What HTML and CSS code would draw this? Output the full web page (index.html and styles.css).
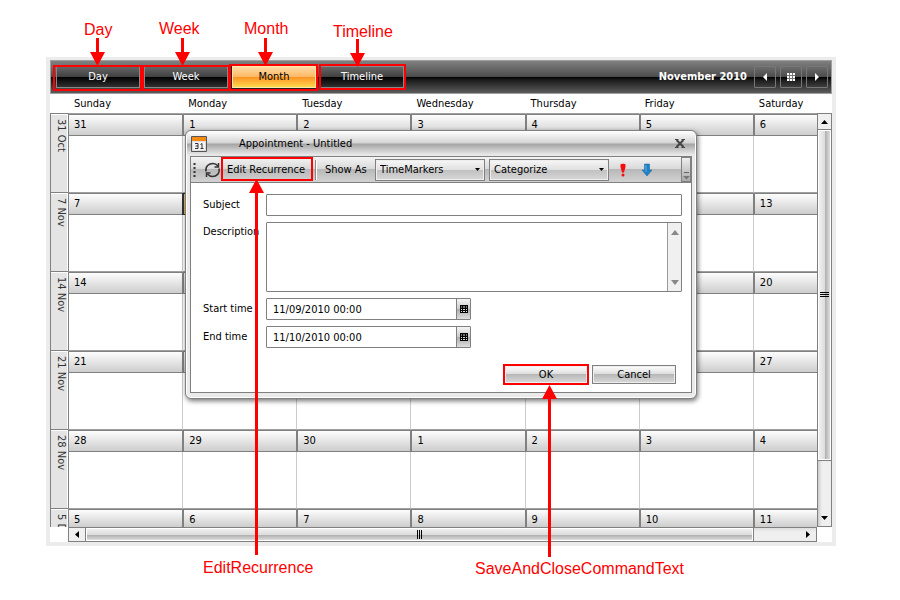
FILE: index.html
```html
<!DOCTYPE html>
<html lang="en">
<head>
<meta charset="utf-8">
<title>Scheduler</title>
<link rel="stylesheet" href="styles.css">
</head>
<body>
<main class="scheduler">
  <header class="toolbar">
    <nav class="views">
      <button class="view">Day</button>
      <button class="view">Week</button>
      <button class="view view-active">Month</button>
      <button class="view">Timeline</button>
    </nav>
    <h1 class="period">November 2010</h1>
    <div class="pager">
      <button class="pager-btn" aria-label="Previous"><svg width="14" height="14"><path d="M9 3v8L5 7z" fill="#fff"/></svg></button>
      <button class="pager-btn" aria-label="Pick date"><svg width="14" height="14"><path d="M3 3h8v8H3z" fill="#fff"/><path d="M5.5 3v8M8.500 3v8M3 5.500h8M3 8.500h8" stroke="#777"/></svg></button>
      <button class="pager-btn" aria-label="Next"><svg width="14" height="14"><path d="M5 3v8l4-4z" fill="#fff"/></svg></button>
    </div>
  </header>
  <div class="viewport">
    <div class="clip">
      <table class="month">
        <thead><tr><th class="corner"></th><th>Sunday</th><th>Monday</th><th>Tuesday</th><th>Wednesday</th><th>Thursday</th><th>Friday</th><th>Saturday</th></tr></thead>
        <tbody>
          <tr><th><span>31 Oct</span></th><td><b>31</b></td><td><b>1</b></td><td><b>2</b></td><td><b>3</b></td><td><b>4</b></td><td><b>5</b></td><td><b>6</b></td></tr>
          <tr><th><span>7 Nov</span></th><td><b>7</b></td><td class="today"><b>8</b></td><td><b>9</b></td><td><b>10</b></td><td><b>11</b></td><td><b>12</b></td><td><b>13</b></td></tr>
          <tr><th><span>14 Nov</span></th><td><b>14</b></td><td><b>15</b></td><td><b>16</b></td><td><b>17</b></td><td><b>18</b></td><td><b>19</b></td><td><b>20</b></td></tr>
          <tr><th><span>21 Nov</span></th><td><b>21</b></td><td><b>22</b></td><td><b>23</b></td><td><b>24</b></td><td><b>25</b></td><td><b>26</b></td><td><b>27</b></td></tr>
          <tr><th><span>28 Nov</span></th><td><b>28</b></td><td><b>29</b></td><td><b>30</b></td><td><b>1</b></td><td><b>2</b></td><td><b>3</b></td><td><b>4</b></td></tr>
          <tr class="partial"><th><span>5 Dec</span></th><td><b>5</b></td><td><b>6</b></td><td><b>7</b></td><td><b>8</b></td><td><b>9</b></td><td><b>10</b></td><td><b>11</b></td></tr>
        </tbody>
      </table>
    </div>
    <div class="vscroll">
      <button class="sb-btn" aria-label="Scroll up"><svg width="13" height="16"><path d="M3 10h7L6.500 6z"/></svg></button>
      <div class="vthumb"><svg width="9" height="6"><path d="M0 .5h9M0 2.500h9M0 4.500h9" stroke="#000"/></svg></div>
      <div class="vtrack"><button class="sb-btn" aria-label="Scroll down"><svg width="13" height="16"><path d="M3 6h7l-3.500 4z"/></svg></button></div>
    </div>
    <div class="hscroll">
      <button class="sb-btn" aria-label="Scroll left"><svg width="16" height="13"><path d="M10 3v7L6 6.500z"/></svg></button>
      <div class="hthumb"><svg width="6" height="9"><path d="M.5 0v9M2.500 0v9M4.500 0v9" stroke="#000"/></svg></div>
      <div class="htrack"><button class="sb-btn" aria-label="Scroll right"><svg width="16" height="13"><path d="M6 3v7l4-3.500z"/></svg></button></div>
    </div>
  </div>
</main>

<section class="dialog" role="dialog" aria-labelledby="dlg-title">
  <header class="titlebar">
    <svg width="16" height="16"><path d="M.5.5h15v15H.5z" fill="#ddd" stroke="#555"/><path d="M1 1h14v4H1z" fill="#f58a12"/><path d="M2 6h12v8H2z" fill="#f4f4f4"/><path d="M4 7.500h3v5H4M4.500 10H7M9.500 8.500l1.500-1v5M9.500 12.500h3" fill="none" stroke="#333"/></svg>
    <h2 id="dlg-title">Appointment - Untitled</h2>
    <button class="close" aria-label="Close"><svg width="10" height="9"><path d="M1.500 1l7 7M8.500 1l-7 7" fill="none" stroke="#444" stroke-width="2"/><path d="M0 .5h3.500M6.500.5H10M0 8.500h3.500M6.500 8.500H10" stroke="#444"/></svg></button>
  </header>
  <div class="panel">
    <div class="tools">
      <svg class="grip" width="3" height="14"><path d="M1.500 0v14" stroke="#333" stroke-width="2" stroke-dasharray="2 2"/></svg>
      <button class="recur"><svg width="17" height="16"><path d="M2 9.500C1 4 5 1.500 9 1.500c2 0 3.500.8 5 2.500M15 6.500c1 5-2.500 8-6.500 8-2 0-3.500-.8-5-2.500" fill="none" stroke="#333" stroke-width="1.500"/><path d="M14.500 1v4h-4M2.500 15v-4h4" fill="none" stroke="#333" stroke-width="1.500"/></svg><span>Edit Recurrence</span></button>
      <i class="sep"></i>
      <label for="show">Show As</label>
      <div class="pick pick-show"><select id="show"><option>TimeMarkers</option></select><svg width="5" height="3"><path d="M0 0h5L2.500 3z"/></svg></div>
      <div class="pick pick-cat"><select aria-label="Category"><option>Categorize</option></select><svg width="5" height="3"><path d="M0 0h5L2.500 3z"/></svg></div>
      <button class="flag" aria-label="High importance"><svg width="12" height="14"><path d="M3.500 1.500C4 .5 8 .5 8.500 1.500 9 4 7.500 7 7 9.500H5C4.500 7 3 4 3.500 1.500z" fill="#f60c0c"/><circle cx="6" cy="12" r="1.500" fill="#f60c0c"/></svg></button>
      <button class="flag" aria-label="Low importance"><svg width="12" height="14"><path d="M3.500 1h5v6H11l-5 6-5-6h2.500z" fill="#1f7ec4" stroke="#1566a3" stroke-width=".5"/><path d="M5 2v7" stroke="#5db2e8"/></svg></button>
      <button class="more" aria-label="More tools"><svg width="7" height="8"><path d="M1 .5h5" stroke="#666"/><path d="M0 4h7L3.500 7.500z" fill="#777"/></svg></button>
    </div>
    <form class="form">
      <label for="subject">Subject</label><input id="subject" type="text">
      <label class="top" for="desc">Description</label>
      <div class="area"><textarea id="desc"></textarea><div class="area-sb"><svg width="8" height="5"><path d="M0 5h8L4 0z" fill="#888"/></svg><svg width="8" height="5"><path d="M0 0h8L4 5z" fill="#888"/></svg></div></div>
      <label for="start">Start time</label>
      <div class="date"><input id="start" type="text" value="11/09/2010 00:00"><button type="button" aria-label="Pick start"><svg width="8" height="8"><path d="M0 0h8v8H0z"/><path d="M1 2h1M3 2h2M6 2h1M1 4.500h1M3 4.500h2M6 4.500h1M1 6.500h1M3 6.500h2M6 6.500h1" stroke="#ddd"/></svg></button></div>
      <label for="end">End time</label>
      <div class="date"><input id="end" type="text" value="11/10/2010 00:00"><button type="button" aria-label="Pick end"><svg width="8" height="8"><path d="M0 0h8v8H0z"/><path d="M1 2h1M3 2h2M6 2h1M1 4.500h1M3 4.500h2M6 4.500h1M1 6.500h1M3 6.500h2M6 6.500h1" stroke="#ddd"/></svg></button></div>
      <div class="actions"><button type="button">OK</button><button type="button">Cancel</button></div>
    </form>
  </div>
</section>

<svg class="callouts" width="900" height="600">
  <g fill="none" stroke="#f00" stroke-width="2">
    <path d="M54 66h87v24H54zM143 66h86v24h-86zM230 65h87v25h-87zM320 65h85v24h-85z"/>
    <path d="M222 158h90v22h-90zM504 365h84v19h-84z"/>
  </g>
  <g stroke="#f00" stroke-width="3">
    <path d="M97.500 38v18M182.500 38v18M265.500 38v18M357.500 39v18M256.500 190v365M549.500 395v162"/>
  </g>
  <g fill="#f00">
    <path d="M90 52h15l-7.500 14zM175 52h15l-7.500 14zM258 52h15l-7.500 14zM350 53h15l-7.500 14zM249 193h15l-7.500-14zM542 399h15l-7.500-14z"/>
    <text x="84" y="35">Day</text><text x="159" y="34">Week</text><text x="244" y="34">Month</text><text x="333" y="37">Timeline</text>
    <text x="203" y="573">EditRecurrence</text><text x="475" y="574">SaveAndCloseCommandText</text>
  </g>
</svg>
</body>
</html>
```
FILE: styles.css
```css
* { box-sizing: border-box; }
body {
  margin: 0;
  padding: 57px 64px 54px 46px;
  background: #fff;
  color: #000;
  font: 11px/14px "DejaVu Sans Condensed", "DejaVu Sans", sans-serif;
}
button, input, select, textarea { font: inherit; color: inherit; margin: 0; padding: 0; border-radius: 0; }
h1, h2 { margin: 0; font-size: 11px; }
svg { display: block; flex: none; }

.scheduler { border: 4px solid #ececec; border-top-width: 3px; }
.toolbar {
  display: flex;
  align-items: center;
  height: 34px;
  padding: 0 3px 0 5px;
  border: 1px solid #a0a0a0;
  background: linear-gradient(#808080, #4c4c4c 49%, #000 50%, #1c1c1c 60%, #5c5c5c);
}
.views { display: flex; gap: 4px; flex: 1; }
.view {
  width: 84px;
  height: 22px;
  border: 1px solid #888;
  background: linear-gradient(#666, #404040 49%, #000 50%, #303030);
  color: #fff;
}
.view-active {
  border: 1px solid #ffe9a8;
  outline: 1px solid #222;
  background: linear-gradient(#ffd9a4, #fdb964 49%, #fb9122 50%, #ffd84e);
  color: #000;
}
.period { color: #fff; }
.pager { display: flex; gap: 4px; margin-left: 7px; }
.pager-btn {
  display: grid;
  place-items: center;
  width: 22px;
  height: 22px;
  border: 1px solid #777;
  border-radius: 1px;
  background: transparent;
}

.viewport { display: grid; grid-template-columns: minmax(0, 1fr) 15px; }
.clip { overflow: hidden; }
.month { width: 817px; table-layout: fixed; border-spacing: 0; }
.month th, .month td { padding: 0; font-weight: normal; text-align: left; vertical-align: top; }
.month thead th { height: 19px; padding: 3px 0 0 6px; }
.month .corner { width: 18px; }
.month thead .corner { padding: 0; }
tbody tr { height: 79px; }
tbody tr.partial { height: 19px; }
tbody th {
  border: 1px solid #808080;
  border-width: 1px 0 0 1px;
  background: #e4e4e4;
  box-shadow: inset 0 1px #fff, inset -1px 0 #fff;
  color: #333;
}
tbody th span { display: block; width: 17px; height: 74px; padding: 5px 0 0; overflow: hidden; writing-mode: vertical-rl; white-space: nowrap; }
.partial th span { height: 18px; }
tbody td { border-top: 1px solid #a0a0a0; border-left: 1px solid #ccc; }
tbody td:nth-child(2) { border-left-color: #808080; }
tbody td b {
  display: block;
  height: 22px;
  padding: 3px 0 0 5px;
  border-top: 1px solid #808080;
  border-bottom: 1px solid #808080;
  border-left: 1px solid #808080;
  background: linear-gradient(#fdfdfd, #cdcdcd);
  font-weight: normal;
}
tbody td:nth-child(n+3) b { margin-left: -1px; border-left-width: 2px; }
tbody td:nth-child(2) b { border-left: 0; }
tbody .today b { border-color: #333; background: linear-gradient(#f5c77c, #e8a93c); }
.partial b { height: 18px; border-bottom: 0; }

.sb-btn { display: grid; place-items: center; border: 0; background: #f0f0f0; }
.vscroll {
  display: flex;
  flex-direction: column;
  margin-top: 19px;
  border: 1px solid #808080;
  background: #efefef;
}
.vscroll > .sb-btn { height: 16px; border-bottom: 1px solid #808080; }
.vthumb, .hthumb { display: grid; place-items: center; border: 1px solid #fff; }
.vthumb { flex: 330; background: linear-gradient(90deg, #f0f0f0, #ddd 50%, #aaa 51%, #ddd); }
.vtrack { flex: 66; display: flex; flex-direction: column; justify-content: flex-end; border-top: 1px solid #808080; background: linear-gradient(90deg, #ccc, #efefef 4px); }
.vtrack .sb-btn, .htrack .sb-btn { background: transparent; }
.hscroll {
  display: flex;
  height: 15px;
  margin-left: 18px;
  border: 1px solid #808080;
  background: #efefef;
}
.hscroll > .sb-btn { width: 17px; border-right: 1px solid #808080; }
.hthumb { flex: 667; background: linear-gradient(#f0f0f0, #ddd 50%, #aaa 51%, #ddd); }
.htrack { flex: 62; display: flex; justify-content: flex-end; border-left: 1px solid #808080; background: linear-gradient(#ddd, #efefef 4px); }

.dialog {
  position: absolute;
  left: 185px;
  top: 130px;
  width: 512px;
  padding: 0 4px 5px;
  border: 1px solid #808080;
  border-radius: 6px;
  background: #eaeaea;
  box-shadow: inset 0 0 0 1px #fff, 1px 2px 5px rgba(0, 0, 0, .55);
}
.titlebar {
  display: flex;
  align-items: center;
  height: 25px;
  margin: 0 -3px;
  padding: 0 10px 0 4px;
  border-radius: 5px 5px 0 0;
  background: linear-gradient(#fff, #d4d4d4 48%, #a4a4a4 52%, #e8e8e8 95%);
}
.titlebar h2 { flex: 1; margin-left: 32px; font-weight: normal; }
.close { border: 0; background: transparent; }
.panel { border: 1px solid #808080; background: #fff; }
.tools {
  display: flex;
  align-items: center;
  height: 26px;
  padding-left: 2px;
  border-bottom: 1px solid #808080;
  background: linear-gradient(#f4f4f4, #d8d8d8 49%, #b8b8b8 50%, #d2d2d2);
}
.recur { display: flex; align-items: center; gap: 6px; width: 110px; margin-left: 8px; border: 0; background: transparent; white-space: nowrap; }
.sep { width: 2px; height: 20px; margin: 0 8px 0 1px; border-left: 1px solid #888; background: #fff; }
.pick { display: flex; align-items: center; height: 22px; border: 1px solid #808080; background: linear-gradient(#f8f8f8, #e0e0e0 49%, #c0c0c0 50%, #d8d8d8); box-shadow: inset 0 0 0 1px #eee; }
.tools label { width: 50px; white-space: nowrap; }
.pick select { flex: 1; min-width: 0; height: 20px; padding-left: 4px; border: 0; background: transparent; appearance: none; }
.pick svg { margin-right: 4px; }
.pick-show { width: 110px; }
.pick-cat { width: 120px; margin: 0 8px 0 4px; }
.flag { margin-right: 12px; border: 0; background: transparent; }
.more { display: flex; align-items: flex-end; justify-content: center; width: 10px; height: 25px; margin-left: auto; padding-bottom: 1px; border: 1px solid #808080; background: linear-gradient(#eee, #aaa); }

.form { display: grid; grid-template-columns: 63px minmax(0, 1fr); gap: 6px 0; padding: 11px 9px 8px 12px; align-items: center; }
.form .top { align-self: start; padding-top: 3px; }
.form input, .area, .date { height: 22px; border: 1px solid #808080; border-radius: 1px; background: #fff; }
.area { display: flex; height: 70px; }
.area textarea { flex: 1; min-width: 0; border: 0; resize: none; outline: 0; }
.area-sb { display: flex; flex-direction: column; align-items: center; justify-content: space-between; width: 14px; padding: 7px 0 6px; border-left: 1px solid #999; background: #f0f0f0; }
.date { display: flex; width: 205px; }
.date input { flex: 1; min-width: 0; height: 20px; padding-left: 6px; border: 0; }
.date button { display: grid; place-items: center; width: 14px; border: 0; border-left: 1px solid #808080; background: linear-gradient(#f4f4f4, #ccc 49%, #aaa 50%, #ddd); }
.actions { grid-column: 1 / -1; display: flex; justify-content: flex-end; gap: 4px; padding: 11px 6px 0 0; }
.actions button { width: 84px; height: 19px; border: 1px solid #808080; box-shadow: inset 0 0 0 1px #eee; background: linear-gradient(#fff, #dcdcdc 49%, #b8b8b8 50%, #dadada); }

.callouts { position: absolute; left: 0; top: 0; pointer-events: none; font: 16px "Liberation Sans", Arial, sans-serif; }
```
